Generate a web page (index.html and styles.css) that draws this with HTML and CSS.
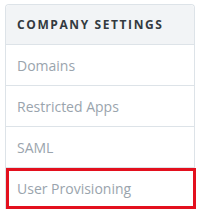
FILE: index.html
```html
<!DOCTYPE html>
<html lang="en">
<head>
    <meta charset="UTF-8">
    <title>Company Settings</title>
    <link rel="stylesheet" href="styles.css">
</head>
<body>
    <div class="settings-panel">
        <div class="settings-header">Company Settings</div>
        <a class="settings-item" href="#">Domains</a>
        <a class="settings-item" href="#">Restricted Apps</a>
        <a class="settings-item" href="#">SAML</a>
        <a class="settings-item highlighted" href="#">User Provisioning</a>
    </div>
</body>
</html>
```

FILE: styles.css
```css
* {
    margin: 0;
    padding: 0;
    box-sizing: border-box;
}

body {
    font-family: "Open Sans", Arial, sans-serif;
    background-color: #fff;
    padding: 4px 5px 0 5px;
}

.settings-panel {
    width: 190px;
    border: 1px solid #dde3e8;
    border-bottom: none;
    border-radius: 4px 4px 0 0;
    display: flex;
    flex-direction: column;
}

.settings-header {
    height: 40px;
    display: flex;
    align-items: center;
    padding-left: 11px;
    background-color: #f2f4f6;
    border-bottom: 1px solid #dde3e8;
    border-radius: 4px 4px 0 0;
    font-size: 12px;
    font-weight: bold;
    letter-spacing: 1.6px;
    text-transform: uppercase;
    color: #333a40;
}

.settings-item {
    height: 41px;
    display: flex;
    align-items: center;
    padding-left: 11px;
    border-bottom: 1px solid #dde3e8;
    font-size: 14px;
    color: #9aa4ad;
    text-decoration: none;
}

.settings-item.highlighted {
    height: 41px;
    margin-right: -2px;
    padding-left: 8px;
    border: 3px solid #e3101e;
}
```
